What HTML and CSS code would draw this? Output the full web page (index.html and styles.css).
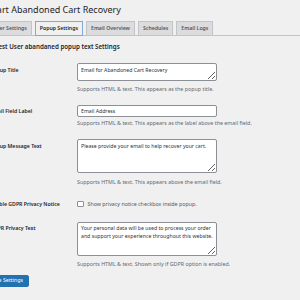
FILE: index.html
```html
<!DOCTYPE html>
<html>
<head>
<meta charset="utf-8">
<link rel="stylesheet" href="styles.css">
</head>
<body>
<div class="wrap">
  <h1 class="title">Smart Abandoned Cart Recovery</h1>
  <nav class="tabs">
    <a class="tab">User Settings</a>
    <a class="tab active">Popup Settings</a>
    <a class="tab">Email Overview</a>
    <a class="tab">Schedules</a>
    <a class="tab">Email Logs</a>
  </nav>
  <h2 class="section">Guest User abandaned popup text Settings</h2>
  <div class="form">
    <div class="row r1">
      <label class="lbl">Popup Title</label>
      <div class="field">
        <textarea class="ta ta-1">Email for Abandoned Cart Recovery</textarea>
        <p class="help">Supports HTML &amp; text. This appears as the popup title.</p>
      </div>
    </div>
    <div class="row r2">
      <label class="lbl">Email Field Label</label>
      <div class="field">
        <input class="inp" type="text" value="Email Address">
        <p class="help help-inp">Supports HTML &amp; text. This appears as the label above the email field.</p>
      </div>
    </div>
    <div class="row r3">
      <label class="lbl">Popup Message Text</label>
      <div class="field">
        <textarea class="ta ta-3">Please provide your email to help recover your cart.</textarea>
        <p class="help help-3">Supports HTML &amp; text. This appears above the email field.</p>
      </div>
    </div>
    <div class="row r4">
      <label class="lbl">Enable GDPR Privacy Notice</label>
      <div class="field check">
        <span class="cb"></span>
        <span class="cb-text">Show privacy notice checkbox inside popup.</span>
      </div>
    </div>
    <div class="row r5">
      <label class="lbl">GDPR Privacy Text</label>
      <div class="field">
        <textarea class="ta ta-5">Your personal data will be used to process your order and support your experience throughout this website.</textarea>
        <p class="help">Supports HTML &amp; text. Shown only if GDPR option is enabled.</p>
      </div>
    </div>
  </div>
  <button class="btn">Save Settings</button>
</div>
</body>
</html>
```
FILE: styles.css
```css
html, body {
  margin: 0;
  padding: 0;
  background: #f0f0f1;
  overflow: hidden;
}
body {
  font-family: "Noto Sans", "Open Sans", sans-serif;
  color: #1d2327;
}
.wrap {
  margin-left: -10px;
  width: 320px;
}
.title {
  margin: 0 0 0 -6.5px;
  padding-top: 3px;
  font-size: 9px;
  line-height: 14px;
  font-weight: 400;
  color: #1d2327;
  white-space: nowrap;
}
.tabs {
  display: flex;
  gap: 3px;
  margin-top: 4px;
  margin-left: -2px;
  border-bottom: 1px solid #c3c4c7;
  height: 14px;
}
.tab {
  box-sizing: border-box;
  height: 14px;
  padding: 0 4px;
  font-size: 5.2px;
  line-height: 13px;
  font-weight: 600;
  color: #50575e;
  background: #dcdcde;
  border: 1px solid #c3c4c7;
  border-bottom: none;
  white-space: nowrap;
}
.tab.active {
  background: #f0f0f1;
  color: #1d2327;
  border: 1px solid #7eaad3;
  height: 15px;
}
.section {
  margin: 6px 0 0 0;
  font-size: 6.2px;
  line-height: 10px;
  font-weight: 600;
  white-space: nowrap;
}
.form {
  margin-top: 5px;
}
.row {
  display: grid;
  grid-template-columns: 87px 140px;
  padding: 6px 0;
}
.lbl {
  font-size: 5.2px;
  line-height: 8px;
  font-weight: 600;
  padding-top: 3px;
  white-space: nowrap;
  color: #1d2327;
}
.r2 .lbl, .r5 .lbl { padding-top: 2px; }
.field {
  display: flex;
  flex-direction: column;
}
.ta, .inp {
  box-sizing: border-box;
  width: 140px;
  margin: 0;
  font-family: "Noto Sans", "Open Sans", sans-serif;
  font-size: 5.2px;
  line-height: 8px;
  color: #2c3338;
  background: #fff;
  border: 1px solid #8c8f94;
  border-radius: 2px;
  padding: 1.5px 3px;
  resize: vertical;
  overflow: hidden;
}
.ta-1 { height: 18px; }
.inp { height: 12px; padding: 0 3px; }
.ta-3 { height: 34px; }
.ta-5 { height: 34px; padding-top: 0.5px; }
.help {
  margin: 4px 0 0 0;
  font-size: 5.35px;
  line-height: 8px;
  color: #646970;
  white-space: nowrap;
}
.help-inp { margin-top: 2px; }
.help-3 { margin-top: 5px; }
.r4 { padding: 8px 0; }
.r4 .lbl { padding-top: 0; }
.check {
  flex-direction: row;
  align-items: center;
  gap: 4px;
  height: 8px;
}
.cb {
  box-sizing: border-box;
  width: 6.5px;
  height: 6.5px;
  border: 1px solid #8c8f94;
  border-radius: 1px;
  background: #fff;
}
.cb-text {
  font-size: 5.3px;
  color: #50575e;
  white-space: nowrap;
}
.btn {
  display: block;
  margin: 1px 0 0 -6px;
  box-sizing: border-box;
  height: 11.5px;
  padding: 0 5px;
  font-family: "Noto Sans", "Open Sans", sans-serif;
  font-size: 5.3px;
  line-height: 9px;
  color: #fff;
  background: #2271b1;
  border: 1px solid #2271b1;
  border-radius: 2px;
}
```
